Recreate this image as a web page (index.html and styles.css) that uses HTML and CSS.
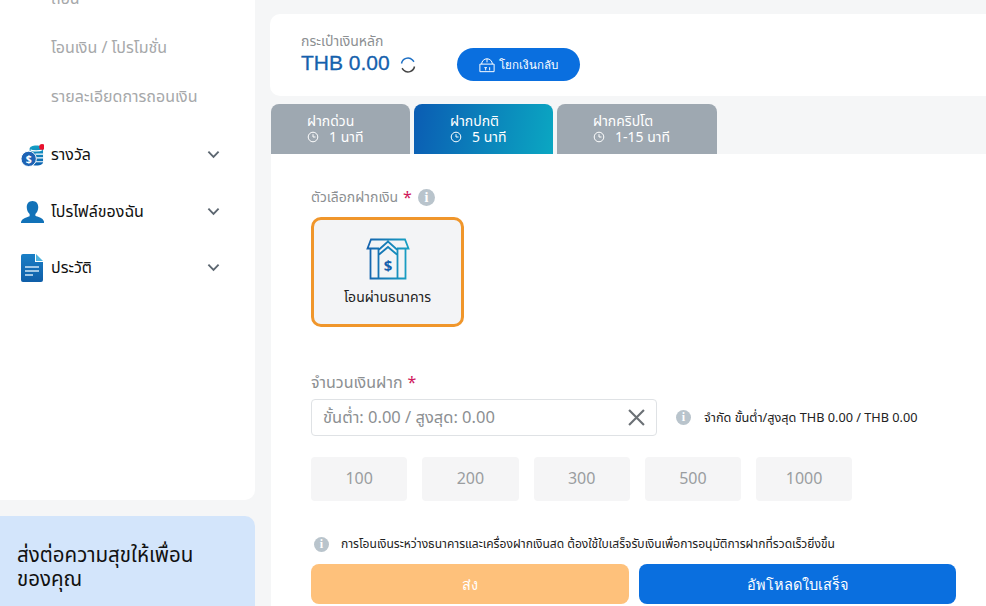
FILE: index.html
```html
<!DOCTYPE html>
<html lang="th">
<head>
<title>ฝากเงิน</title>
<meta charset="utf-8" />
<link rel="stylesheet" href="styles.css">
</head>
<body>
<div class="page">
	<aside class="side">
		<div class="menu">
			<div class="sub">
				<a class="cut">ถอน</a>
				<a>โอนเงิน / โปรโมชั่น</a>
				<a>รายละเอียดการถอนเงิน</a>
			</div>
			<div class="item first">
				<svg class="ico" viewBox="0 0 24 24"><defs><linearGradient id="g1" x1="0" y1="0" x2="0" y2="1"><stop offset="0" stop-color="#12a0c4"/><stop offset="1" stop-color="#0d5fb0"/></linearGradient></defs><path d="M9 5c0-2.200 3-3.500 7-3.500s7 1.300 7 3.500v14c0 1.600-2.500 3.500-7 3.500S9 21 9 19z" fill="url(#g1)"/><path d="M10 6c1.500 1.500 10 1.500 12 0M15 10.500h8M16 14.500h7M15 18.500h8" stroke="#fff" stroke-width="1.200" fill="none"/><circle cx="8" cy="15.500" r="8" fill="#1d63b4" stroke="#fff" stroke-width="1"/><text x="8" y="19.500" class="dollar">$</text><circle cx="22" cy="3" r="3" fill="#e8112d"/></svg>
				<span>รางวัล</span>
				<svg class="chev" viewBox="0 0 14 9"><path d="M1.500 1.500 7 7l5.500-5.500" /></svg>
			</div>
			<div class="item">
				<svg class="ico" viewBox="0 0 24 24"><path fill="#1272b8" d="M12 1c4 0 6 3 6 6.500 0 3-1.300 5.500-3 7v2c2 1.200 8 1.800 9 6v1.500H0V23c1-4.200 7-5 9-6v-2.500c-1.700-1.500-3-4-3-7C6 4 8 1 12 1z"/></svg>
				<span>โปรไฟล์ของฉัน</span>
				<svg class="chev" viewBox="0 0 14 9"><path d="M1.500 1.500 7 7l5.500-5.500" /></svg>
			</div>
			<div class="item doc">
				<svg class="ico tall" viewBox="0 0 22 28"><defs><linearGradient id="g2" x1="0" y1="0" x2="0" y2="1"><stop offset="0" stop-color="#1a7fc6"/><stop offset="1" stop-color="#0f5ea8"/></linearGradient></defs><path fill="url(#g2)" d="M2 0h12v8h8v18a2 2 0 0 1-2 2H2a2 2 0 0 1-2-2V2a2 2 0 0 1 2-2z"/><path fill="#4db4e0" d="M15 0l7 7h-7z"/><path d="M4 13h14M4 17h14M4 21h8" stroke="#cfe6f6" stroke-width="1.500"/></svg>
				<span>ประวัติ</span>
				<svg class="chev" viewBox="0 0 14 9"><path d="M1.500 1.500 7 7l5.500-5.500" /></svg>
			</div>
		</div>
		<div class="promo">ส่งต่อความสุขให้เพื่อน ของคุณ</div>
	</aside>
	<main class="main">
		<section class="wallet">
			<div class="balance">
				<div class="wallet-name">กระเป๋าเงินหลัก</div>
				<div class="amount">THB 0.00
					<svg class="refresh" viewBox="0 0 18 18"><path d="M2.500 7.500a6.500 6.500 0 0 1 11-3.500l1.500 1.700" stroke="#1d6fc4"/><path d="M15.500 10.500a6.500 6.500 0 0 1-11 3.500L3 12.300" stroke="#444"/></svg>
				</div>
			</div>
			<button class="back-btn">
				<svg viewBox="0 0 20 18"><path d="M2 8h16v8.500H2zM4 8a6 6 0 0 1 12 0M10 2v4M7 12h3M8.500 12v3M13 11.500v3.500" /></svg>
				โยกเงินกลับ
			</button>
		</section>
		<nav class="tabs">
			<div class="tab">ฝากด่วน
				<div class="time"><svg viewBox="0 0 12 12"><circle cx="6" cy="6" r="4.800"/><path d="M6 3.200V6h2.500"/></svg>1 นาที</div>
			</div>
			<div class="tab active">ฝากปกติ
				<div class="time"><svg viewBox="0 0 12 12"><circle cx="6" cy="6" r="4.800"/><path d="M6 3.200V6h2.500"/></svg>5 นาที</div>
			</div>
			<div class="tab wide">ฝากคริปโต
				<div class="time"><svg viewBox="0 0 12 12"><circle cx="6" cy="6" r="4.800"/><path d="M6 3.200V6h2.500"/></svg>1-15 นาที</div>
			</div>
		</nav>
		<section class="panel">
			<div class="label">ตัวเลือกฝากเงิน <b>*</b> <i class="info big">i</i></div>
			<div class="option">
				<svg viewBox="0 0 44 42"><defs><linearGradient id="g3" gradientUnits="userSpaceOnUse" x1="0" y1="0" x2="44" y2="0"><stop offset="0" stop-color="#1560ad"/><stop offset="1" stop-color="#19a3c4"/></linearGradient></defs><path fill="none" stroke="url(#g3)" stroke-width="1.800" d="M13 10.500H1.500L5 1.500h34l3.500 9H31M4.500 10.500V40.500h35V10.500M12.500 40.500V12L22 3.500 31.500 12v28.500M12.500 17 22 9l9.500 8"/><text x="22" y="33" class="bank-dollar">$</text></svg>
				<div>โอนผ่านธนาคาร</div>
			</div>
			<div class="label amount-label">จำนวนเงินฝาก <b>*</b></div>
			<div class="amount-row">
				<div class="field">
					<span>ขั้นต่ำ: 0.00 / สูงสุด: 0.00</span>
					<svg viewBox="0 0 16 16"><path d="M1 1l14 14M15 1 1 15"/></svg>
				</div>
				<div class="limit"><i class="info">i</i>จำกัด ขั้นต่ำ/สูงสุด THB 0.00 / THB 0.00</div>
			</div>
			<div class="quick">
				<div>100</div><div>200</div><div>300</div><div>500</div><div>1000</div>
			</div>
			<div class="note"><i class="info">i</i>การโอนเงินระหว่างธนาคารและเครื่องฝากเงินสด ต้องใช้ใบเสร็จรับเงินเพื่อการอนุมัติการฝากที่รวดเร็วยิ่งขึ้น</div>
			<div class="actions">
				<button class="send">ส่ง</button>
				<button class="upload">อัพโหลดใบเสร็จ</button>
			</div>
		</section>
	</main>
</div>
</body>
</html>
```
FILE: styles.css
```css
* {
	box-sizing: border-box;
}
body {
	margin: 0;
	font-family: "Noto Sans", "Noto Sans Thai", "Noto Sans CJK SC", sans-serif;
	background: #f5f6f7;
	color: #222;
}
.page {
	height: 606px;
	display: flex;
	overflow: hidden;
}
.side {
	flex: 0 0 255px;
	display: flex;
	flex-direction: column;
	gap: 16px;
}
.menu {
	height: 500px;
	background: #fff;
	border-radius: 0 0 10px 0;
	overflow: hidden;
}
.sub {
	margin-top: -14px;
	padding-left: 51px;
	display: flex;
	flex-direction: column;
	gap: 25px;
}
.sub a {
	font-size: 16px;
	line-height: 24px;
	color: #a6a8aa;
}
.item {
	height: 56.500px;
	padding: 0 35px 0 21px;
	display: flex;
	align-items: center;
	font-size: 16px;
	color: #111;
}
.item.first {
	margin-top: 19px;
}
.item span {
	flex: 1;
	margin-left: 7px;
}
.ico {
	width: 23px;
	height: 23px;
}
.ico.tall {
	height: 28px;
	width: 22px;
	margin-right: 1px;
}
.dollar {
	font-size: 11px;
	font-weight: 700;
	fill: #fff;
	text-anchor: middle;
}
.chev {
	width: 13px;
	height: 9px;
	margin-top: -1px;
	fill: none;
	stroke: #5c6670;
	stroke-width: 2;
}
.promo {
	flex: 1;
	background: #d3e5fb;
	border-radius: 0 10px 0 0;
	padding: 26px 40px 0 17px;
	font-size: 20.500px;
	line-height: 24px;
	color: #111;
}
.main {
	flex: 1;
	margin-left: 15px;
	padding-top: 14px;
	display: flex;
	flex-direction: column;
}
.wallet {
	height: 82px;
	background: #fff;
	border-radius: 10px 0 0 10px;
	padding: 19px 0 0 31px;
	display: flex;
}
.wallet-name {
	font-size: 14px;
	line-height: 16px;
	color: #8c8f92;
}
.amount {
	font-family: "Liberation Sans", sans-serif;
	font-size: 21px;
	line-height: 28px;
	-webkit-text-stroke: 0.3px #1561ad;
	color: #1561ad;
	display: flex;
	align-items: center;
	gap: 9px;
}
.refresh {
	width: 18px;
	height: 18px;
	margin-top: 3px;
	fill: none;
	stroke-width: 1.500;
}
.back-btn {
	width: 123px;
	height: 33px;
	margin: 15px 0 0 40px;
	border: 0;
	border-radius: 17px;
	background: #0a6fdf;
	color: #fff;
	font: 11.500px "Noto Sans", sans-serif;
	display: flex;
	align-items: center;
	justify-content: center;
	gap: 3px;
	padding-right: 6px;
}
.back-btn svg {
	width: 18px;
	height: 16px;
	fill: none;
	stroke: #fff;
	stroke-width: 1.100;
}
.tabs {
	margin: 8px 0 0 1px;
	display: flex;
	gap: 4px;
}
.tab {
	width: 139px;
	height: 50px;
	padding: 9px 0 0 36px;
	border-radius: 8px 8px 0 0;
	background: #9ea8b1;
	color: #fff;
	font-size: 14px;
	line-height: 16px;
}
.tab.wide {
	width: 160px;
}
.tab.active {
	background: linear-gradient(100deg, #0b5cb3, #0ba7c2);
}
.time {
	display: flex;
	align-items: center;
}
.time svg {
	width: 12px;
	height: 12px;
	margin-right: 10px;
	fill: none;
	stroke: #fff;
	stroke-width: 1;
}
.panel {
	flex: 1;
	margin-left: 1px;
	padding: 33px 0 0 40px;
	background: #fff;
}
.label {
	font-size: 14px;
	line-height: 20px;
	color: #8c8f92;
	display: flex;
	align-items: center;
	gap: 5px;
}
.label b {
	color: #d0175c;
	font-weight: 400;
	font-size: 16px;
}
.info {
	flex: none;
	width: 15px;
	height: 15px;
	border-radius: 50%;
	background: #b9c4cc;
	color: #fff;
	font: 700 12px/15px "Liberation Serif", serif;
	text-align: center;
}
.info.big {
	width: 17px;
	height: 17px;
	font-size: 14px;
	line-height: 17px;
	margin-left: 1px;
}
.option {
	width: 153px;
	height: 110px;
	margin-top: 10px;
	border: 3px solid #f0962b;
	border-radius: 10px;
	background: #f3f4f6;
	font-size: 14px;
	text-align: center;
	display: flex;
	flex-direction: column;
	align-items: center;
	color: #222;
}
.option svg {
	width: 44px;
	height: 42px;
	margin: 18px 0 7px;
}
.bank-dollar {
	font-size: 15px;
	font-weight: 700;
	fill: #1560ad;
	text-anchor: middle;
}
.amount-label {
	margin-top: 45px;
	font-size: 16px;
}
.amount-row {
	margin-top: 7px;
	display: flex;
	align-items: center;
}
.field {
	width: 346px;
	height: 37px;
	padding: 0 11px;
	border: 1px solid #dfe2e5;
	border-radius: 4px;
	font-size: 16.500px;
	color: #8c8f92;
	display: flex;
	align-items: center;
	justify-content: space-between;
}
.field svg {
	width: 17px;
	height: 17px;
	fill: none;
	stroke: #6b7075;
	stroke-width: 2;
}
.limit {
	margin-left: 19px;
	font-size: 12.700px;
	color: #222;
	display: flex;
	align-items: center;
	gap: 13px;
}
.quick {
	margin-top: 21px;
	display: flex;
	gap: 15px;
}
.quick div {
	width: 96.250px;
	height: 44px;
	border-radius: 4px;
	background: #f5f5f6;
	color: #9a9da0;
	font-size: 16px;
	line-height: 42px;
	text-align: center;
}
.note {
	margin-top: 33px;
	height: 20px;
	padding-left: 3px;
	font-size: 12.050px;
	color: #222;
	display: flex;
	align-items: center;
	gap: 12px;
}
.actions {
	margin-top: 10px;
	display: flex;
	gap: 10px;
}
.actions button {
	height: 40px;
	border: 0;
	border-radius: 8px;
	color: #fff;
	font: 14.500px "Noto Sans", sans-serif;
}
.send {
	width: 318px;
	background: #fec17b;
}
.upload {
	width: 317px;
	background: #0a6fdf;
}
```
